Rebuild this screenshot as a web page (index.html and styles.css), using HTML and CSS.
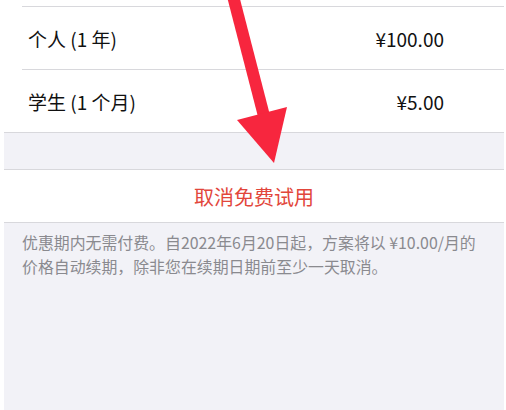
FILE: index.html
```html
<!DOCTYPE html>
<html lang="zh-CN">
<head>
    <meta charset="UTF-8">
    <meta name="viewport" content="width=device-width, initial-scale=1.0">
    <title>订阅</title>
    <link rel="stylesheet" href="styles.css">
</head>
<body>
    <div class="screen">
        <div class="list">
            <div class="top-tail"></div>
            <div class="row">
                <span class="plan">个人 (1 年)</span>
                <span class="price">¥100.00</span>
            </div>
            <div class="row">
                <span class="plan">学生 (1 个月)</span>
                <span class="price">¥5.00</span>
            </div>
        </div>

        <div class="gap"></div>

        <div class="action">取消免费试用</div>

        <p class="note">优惠期内无需付费。自2022年6月20日起，方案将以 ¥10.00/月的价格自动续期，除非您在续期日期前至少一天取消。</p>

        <!-- annotation arrow drawn over the screenshot -->
        <svg class="arrow" width="506" height="170" viewBox="0 0 506 170">
            <line x1="233" y1="-4" x2="264" y2="116" stroke="#f7263e" stroke-width="12" />
            <polygon points="237,120 287,107 274,163" fill="#f7263e" />
        </svg>
    </div>
</body>
</html>
```

FILE: styles.css
```css
body {
    margin: 0;
    background: #fff;
    font-family: "Noto Sans CJK SC", "Noto Sans", sans-serif;
}
.screen {
    position: relative;
    margin: 0 2px 0 4px;
    height: 410px;
    background: #f2f2f7;
    overflow: hidden;
}
.list {
    background: #fff;
    border-bottom: 1px solid #d8d8dc;
}
.top-tail {
    height: 6px;
}
.row {
    display: flex;
    justify-content: space-between;
    align-items: center;
    height: 62px;
    margin-left: 18px;
    padding: 0 60px 0 6px;
    border-top: 1px solid #d8d8dc;
    font-size: 19px;
    color: #111;
}
.gap {
    height: 36px;
    border-bottom: 1px solid #d8d8dc;
}
.action {
    height: 52px;
    display: flex;
    align-items: center;
    justify-content: center;
    background: #fff;
    border-bottom: 1px solid #d8d8dc;
    font-size: 20px;
    color: #e2463b;
}
.note {
    margin: 0;
    padding: 8px 20px 0 18px;
    font-size: 15.9px;
    line-height: 24px;
    color: #8a8a8f;
}
.arrow {
    position: absolute;
    top: 0;
    left: -4px;
}
```
